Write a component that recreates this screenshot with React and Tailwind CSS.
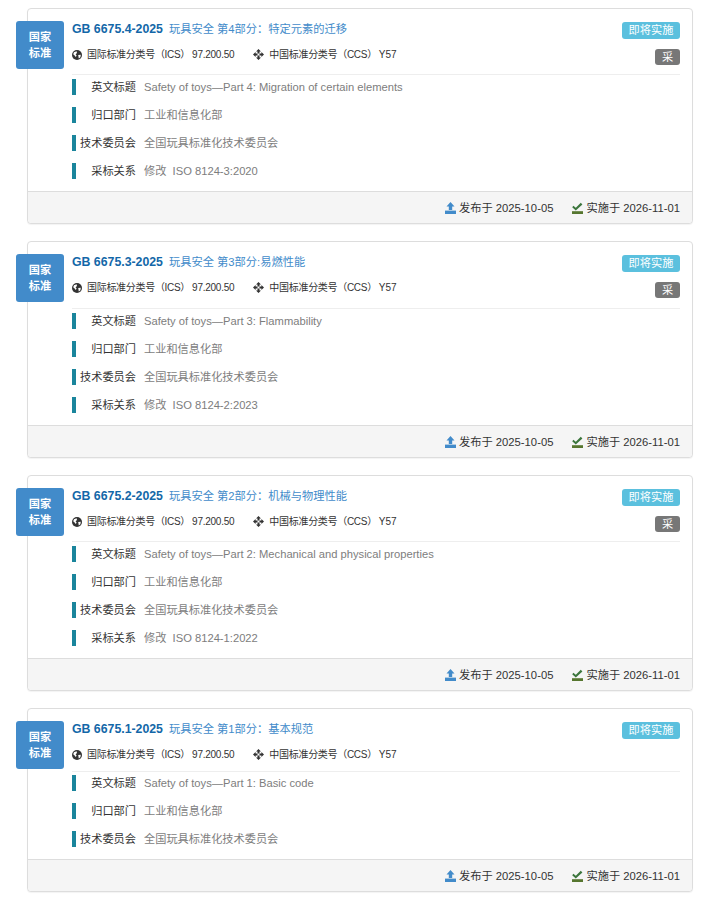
const FONT = "font-['Liberation_Sans','Noto_Sans_CJK_SC',sans-serif]";

function Globe() {
  return (
    <svg width="10" height="10" viewBox="0 0 10 10" className="shrink-0">
      <circle cx="5" cy="5" r="5" fill="#333" />
      <path d="M2 2.2 L4.6 1.2 L5 3 L3.6 4.2 L4.6 5.6 L3.8 7 L2.6 5.4 L1.2 4.2 Z" fill="#fff" />
      <path d="M6.2 5 L8.8 4.8 L8.4 7.2 L6.8 8.6 Z" fill="#fff" />
    </svg>
  );
}

function Move() {
  return (
    <svg width="11" height="11" viewBox="0 0 11 11" className="block shrink-0" fill="#333">
      <path d="M5.5 0 L8 2.6 L6.5 2.6 L6.5 4.5 L4.5 4.5 L4.5 2.6 L3 2.6 Z" />
      <path d="M5.5 11 L8 8.4 L6.5 8.4 L6.5 6.5 L4.5 6.5 L4.5 8.4 L3 8.4 Z" />
      <path d="M0 5.5 L2.6 3 L2.6 4.5 L4.5 4.5 L4.5 6.5 L2.6 6.5 L2.6 8 Z" />
      <path d="M11 5.5 L8.4 3 L8.4 4.5 L6.5 4.5 L6.5 6.5 L8.4 6.5 L8.4 8 Z" />
    </svg>
  );
}

function Upload() {
  return (
    <svg width="11" height="12" viewBox="0 0 11 12" className="shrink-0" fill="#428bca">
      <path d="M5.5 0 L9.5 4.4 L7.2 4.4 L7.2 8 L3.8 8 L3.8 4.4 L1.5 4.4 Z" />
      <path d="M0 8.6 L11 8.6 L11 12 L0 12 Z" />
    </svg>
  );
}

function Check() {
  return (
    <svg width="11" height="12" viewBox="0 0 11 12" className="shrink-0">
      <path d="M1.4 3.8 L3.8 5.8 L8.8 0.8 L10.4 2.4 L3.8 8.6 L0.2 5.2 Z" fill="#3c763d" />
      <path d="M0 9.2 L11 9.2 L11 12 L0 12 Z" fill="#56762f" />
    </svg>
  );
}

function Row({ label, children }) {
  return (
    <div className="flex h-[28px] items-center">
      <div className="h-[16px] w-[4px] shrink-0 bg-[#1a859c]" />
      <div className="w-[60px] shrink-0 text-right text-[11.2px] text-[#333]">{label}</div>
      <div className="ml-[8px] text-[11.2px] text-[#7d7d7d]">{children}</div>
    </div>
  );
}

function Card({ code, title, en, iso, hasBadge, hrClass, rowsClass }) {
  return (
    <div className="relative rounded-[4px] border border-[#ddd] bg-white shadow-[0_1px_1px_rgba(0,0,0,0.05)]">
      <div className="absolute left-[-12px] top-[12px] flex h-[48px] w-[48px] items-center justify-center rounded-[3px] bg-[#428bca] text-center text-[11.2px] font-bold leading-[16px] text-white">
        国家<br />标准
      </div>
      <div className="pl-[44px] pr-[12px] pt-[12px]">
        <div className="flex items-start justify-between">
          <div>
            <div className="flex h-[17px] items-center">
              <span className="text-[12.3px] font-bold text-[#1367a8]">{code}</span>
              <span className="ml-[6px] text-[11.25px] text-[#428bca]">{title}</span>
            </div>
            <div className="mt-[8px] flex h-[17px] items-center text-[10px] text-[#333]">
              <Globe />
              <span className="ml-[5px] tracking-[-0.3px]">国际标准分类号（ICS）</span>
              <span className="ml-[2px] tracking-[-0.25px]">97.200.50</span>
              <span className="ml-[19px]"><Move /></span>
              <span className="ml-[5px] tracking-[-0.3px]">中国标准分类号（CCS）</span>
              <span className="ml-[2px]">Y57</span>
            </div>
          </div>
          <div className="mt-[1px] flex flex-col items-end">
            <span className="flex h-[17px] w-[58px] items-center justify-center rounded-[3px] bg-[#5bc0de] text-[11.2px] text-white">即将实施</span>
            {hasBadge && (
              <span className="mt-[10px] flex h-[16px] w-[25px] items-center justify-center rounded-[3px] bg-[#777] text-[11.2px] text-white">采</span>
            )}
          </div>
        </div>
        <div className={`border-t border-[#eee] ${hrClass}`} />
        <div className={`pb-[6px] ${rowsClass}`}>
          <Row label="英文标题">{en}</Row>
          <Row label="归口部门">工业和信息化部</Row>
          <Row label="技术委员会">全国玩具标准化技术委员会</Row>
          {iso && <Row label="采标关系">修改&nbsp;&nbsp;{iso}</Row>}
        </div>
      </div>
      <div className="flex h-[32px] items-center justify-end gap-[19px] rounded-b-[4px] border-t border-[#ddd] bg-[#f5f5f5] pr-[12px] pt-[1px] text-[11.25px] text-[#333]">
        <span className="flex items-center gap-[3px]"><Upload />发布于 2025-10-05</span>
        <span className="flex items-center gap-[3px]"><Check />实施于 2026-11-01</span>
      </div>
    </div>
  );
}

export default function App() {
  return (
    <div className={`${FONT} flex flex-col gap-[17px] pb-[15px] pl-[27px] pr-[17px] pt-[8px]`}>
      <Card code="GB 6675.4-2025" title="玩具安全 第4部分：特定元素的迁移" en="Safety of toys—Part 4: Migration of certain elements" iso="ISO 8124-3:2020" hasBadge hrClass="mt-[9px]" rowsClass="mt-[-2px]" />
      <Card code="GB 6675.3-2025" title="玩具安全 第3部分:易燃性能" en="Safety of toys—Part 3: Flammability" iso="ISO 8124-2:2023" hasBadge hrClass="mt-[10px]" rowsClass="mt-[-2px]" />
      <Card code="GB 6675.2-2025" title="玩具安全 第2部分：机械与物理性能" en="Safety of toys—Part 2: Mechanical and physical properties" iso="ISO 8124-1:2022" hasBadge hrClass="mt-[9px]" rowsClass="mt-[-2px]" />
      <Card code="GB 6675.1-2025" title="玩具安全 第1部分：基本规范" en="Safety of toys—Part 1: Basic code" hrClass="mt-[8px]" rowsClass="mt-[-3px]" />
    </div>
  );
}
